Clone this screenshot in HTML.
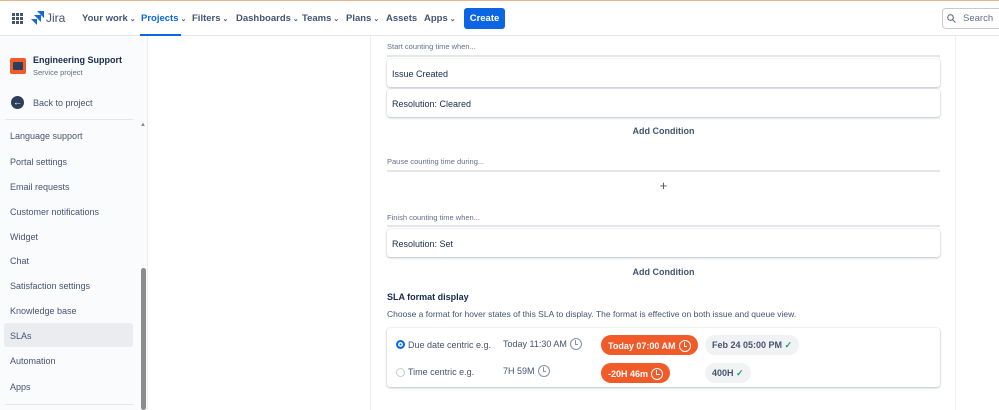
<!DOCTYPE html>
<html><head><meta charset="utf-8"><style>
*{box-sizing:border-box;margin:0;padding:0}
body{width:999px;height:410px;overflow:hidden;font-family:"Liberation Sans",sans-serif;background:#fff;color:#172b4d;position:relative}
.top{position:absolute;left:0;top:0;width:999px;height:36px;border-top:1px solid #e3b48f;border-bottom:1px solid #e4e6ea;background:#fff}
.nav{position:absolute;top:12px;font-size:9.5px;color:#44546f;font-weight:bold}
.nav.a{color:#0c66e4}
.chev{font-size:7px;margin-left:2px}
.side{position:absolute;left:0;top:36px;width:148px;height:374px;background:#fafbfc;border-right:1px solid #eee}
.si{position:absolute;left:10px;font-size:9px;color:#44546f}
.main{position:absolute;left:370px;top:36px;width:586px;height:374px;border-left:1px solid #eceef1;border-right:1px solid #eceef1}
.lbl{position:absolute;left:16px;font-size:7.5px;color:#626f86}
.line{position:absolute;left:16px;width:553px;height:2px;background:#e4e6ea}
.box{position:absolute;left:16px;width:553px;height:28px;border-radius:3px;box-shadow:0 1px 2px rgba(9,30,66,.25),0 0 1px rgba(9,30,66,.2);font-size:9px;padding:10px 5px;color:#172b4d}
.add{position:absolute;left:16px;width:553px;text-align:center;font-size:9px;font-weight:bold;color:#44546f}
.pill{position:absolute;height:20px;border-radius:10px;font-size:9px;font-weight:bold;padding:5px 7px;white-space:nowrap}
.red{background:#f15b2a;color:#fff}
.gr{background:#f1f2f4;color:#44546f}
.clk{display:inline-block;width:12px;height:12px;border:1.5px solid currentColor;border-radius:50%;vertical-align:-3px;position:relative;margin-left:3px}
.clk:after{content:"";position:absolute;left:4px;top:1px;width:2.5px;height:3.5px;border-left:1.5px solid currentColor;border-bottom:1.5px solid currentColor}
</style></head><body>
<div class="top">
<svg style="position:absolute;left:12px;top:12px" width="11" height="11"><g fill="#44546f"><rect x="0" y="0" width="3" height="3"/><rect x="4" y="0" width="3" height="3"/><rect x="8" y="0" width="3" height="3"/><rect x="0" y="4" width="3" height="3"/><rect x="4" y="4" width="3" height="3"/><rect x="8" y="4" width="3" height="3"/><rect x="0" y="8" width="3" height="3"/><rect x="4" y="8" width="3" height="3"/><rect x="8" y="8" width="3" height="3"/></g></svg>
<svg style="position:absolute;left:31px;top:10px" width="13" height="14"><path d="M6 0h7v7L6 0zM3 4h7v7L3 4zM0 8h6v6L0 8z" fill="#1868db"/></svg>
<div style="position:absolute;left:46px;top:10px;font-size:12px;color:#44546f">Jira</div>
<div class="nav" style="left:82px">Your work<span class="chev">⌄</span></div>
<div class="nav a" style="left:141px">Projects<span class="chev">⌄</span></div>
<div style="position:absolute;left:140px;top:33px;width:41px;height:2px;background:#0c66e4"></div>
<div class="nav" style="left:192px">Filters<span class="chev">⌄</span></div>
<div class="nav" style="left:236px">Dashboards<span class="chev">⌄</span></div>
<div class="nav" style="left:302px">Teams<span class="chev">⌄</span></div>
<div class="nav" style="left:346px">Plans<span class="chev">⌄</span></div>
<div class="nav" style="left:386px">Assets</div>
<div class="nav" style="left:424px">Apps<span class="chev">⌄</span></div>
<div style="position:absolute;left:464px;top:7px;width:41px;height:21px;background:#0c66e4;border-radius:3px;color:#fff;font-size:9.5px;font-weight:bold;text-align:center;line-height:21px">Create</div>
<div style="position:absolute;left:942px;top:7px;width:70px;height:21px;border:1px solid #c7cbd1;border-radius:4px;font-size:9.5px;color:#626f86;padding:4px 0 0 20px">Search</div>
<svg style="position:absolute;left:947px;top:13px" width="9" height="9"><circle cx="3.5" cy="3.5" r="2.8" stroke="#626f86" fill="none" stroke-width="1.1"/><path d="M5.5 5.5L8.5 8.5" stroke="#626f86" stroke-width="1.1"/></svg>
</div>
<div class="side">
<div style="position:absolute;left:10px;top:22px;width:16px;height:16px;background:#f15b2a;border-radius:2px"><div style="position:absolute;left:3px;top:4px;width:10px;height:8px;background:#2c3e5d;border-radius:1px"></div></div>
<div class="si" style="left:33px;top:19px;font-weight:bold;color:#172b4d">Engineering Support</div>
<div class="si" style="left:33px;top:32px;font-size:7.5px;color:#626f86">Service project</div>
<div style="position:absolute;left:11px;top:60px;width:13px;height:13px;border-radius:50%;background:#2c3e5d;color:#fff;font-size:9px;line-height:12px;text-align:center;font-weight:bold">←</div>
<div class="si" style="left:33px;top:62px">Back to project</div>
<div style="position:absolute;left:5px;top:83px;width:128px;height:1px;background:#e4e6ea"></div>
<div style="position:absolute;left:140px;top:86px;font-size:6px;color:#888">▲</div>
<div class="si" style="top:95px">Language support</div>
<div class="si" style="top:121px">Portal settings</div>
<div class="si" style="top:146px">Email requests</div>
<div class="si" style="top:171px">Customer notifications</div>
<div class="si" style="top:196px">Widget</div>
<div class="si" style="top:220px">Chat</div>
<div class="si" style="top:245px">Satisfaction settings</div>
<div class="si" style="top:270px">Knowledge base</div>
<div style="position:absolute;left:4px;top:287px;width:129px;height:24px;background:#ebecf0;border-radius:3px"></div>
<div class="si" style="top:295px">SLAs</div>
<div class="si" style="top:320px">Automation</div>
<div class="si" style="top:346px">Apps</div>
<div style="position:absolute;left:5px;top:368px;width:128px;height:1px;background:#e4e6ea"></div>
<div style="position:absolute;left:141px;top:232px;width:5px;height:142px;background:#8c8c8c;border-radius:3px"></div>
</div>
<div class="main">
<div class="lbl" style="top:6px">Start counting time when...</div>
<div class="line" style="top:19px"></div>
<div class="box" style="top:23px">Issue Created</div>
<div class="box" style="top:53px">Resolution: Cleared</div>
<div class="add" style="top:90px">Add Condition</div>
<div class="lbl" style="top:121px">Pause counting time during...</div>
<div class="line" style="top:134px"></div>
<div class="add" style="top:142px;font-size:13px;font-weight:normal">+</div>
<div class="lbl" style="top:177px">Finish counting time when...</div>
<div class="line" style="top:189px"></div>
<div class="box" style="top:193px">Resolution: Set</div>
<div class="add" style="top:231px">Add Condition</div>
<div style="position:absolute;left:16px;top:256px;font-size:9px;font-weight:bold">SLA format display</div>
<div style="position:absolute;left:16px;top:273px;font-size:8.5px;color:#44546f">Choose a format for hover states of this SLA to display. The format is effective on both issue and queue view.</div>
<div style="position:absolute;left:16px;top:292px;width:553px;height:59px;border-radius:3px;box-shadow:0 1px 2px rgba(9,30,66,.25),0 0 1px rgba(9,30,66,.25)">
<div style="position:absolute;left:9px;top:12px;width:9px;height:9px;border-radius:50%;background:#0c66e4;border:2.5px solid #0c66e4;box-shadow:inset 0 0 0 1.5px #fff"></div>
<div style="position:absolute;left:21px;top:12px;font-size:9px;color:#44546f">Due date centric e.g.</div>
<div style="position:absolute;left:9px;top:40px;width:9px;height:9px;border-radius:50%;border:1px solid #c7cbd1"></div>
<div style="position:absolute;left:21px;top:39px;font-size:9px;color:#44546f">Time centric e.g.</div>
<div style="position:absolute;left:116px;top:10px;font-size:9px;color:#44546f;color:#44546f">Today 11:30 AM<span class="clk" style="color:#8590a2"></span></div>
<div style="position:absolute;left:116px;top:37px;font-size:9px;color:#44546f">7H 59M<span class="clk" style="color:#8590a2"></span></div>
<div class="pill red" style="left:214px;top:7px">Today 07:00 AM<span class="clk" style="color:#fff"></span></div>
<div class="pill red" style="left:214px;top:35px">-20H 46m<span class="clk" style="color:#fff"></span></div>
<div class="pill gr" style="left:318px;top:7px">Feb 24 05:00 PM <span style="color:#22a06b">✓</span></div>
<div class="pill gr" style="left:318px;top:35px">400H <span style="color:#22a06b">✓</span></div>
</div>
</div>
</body></html>
